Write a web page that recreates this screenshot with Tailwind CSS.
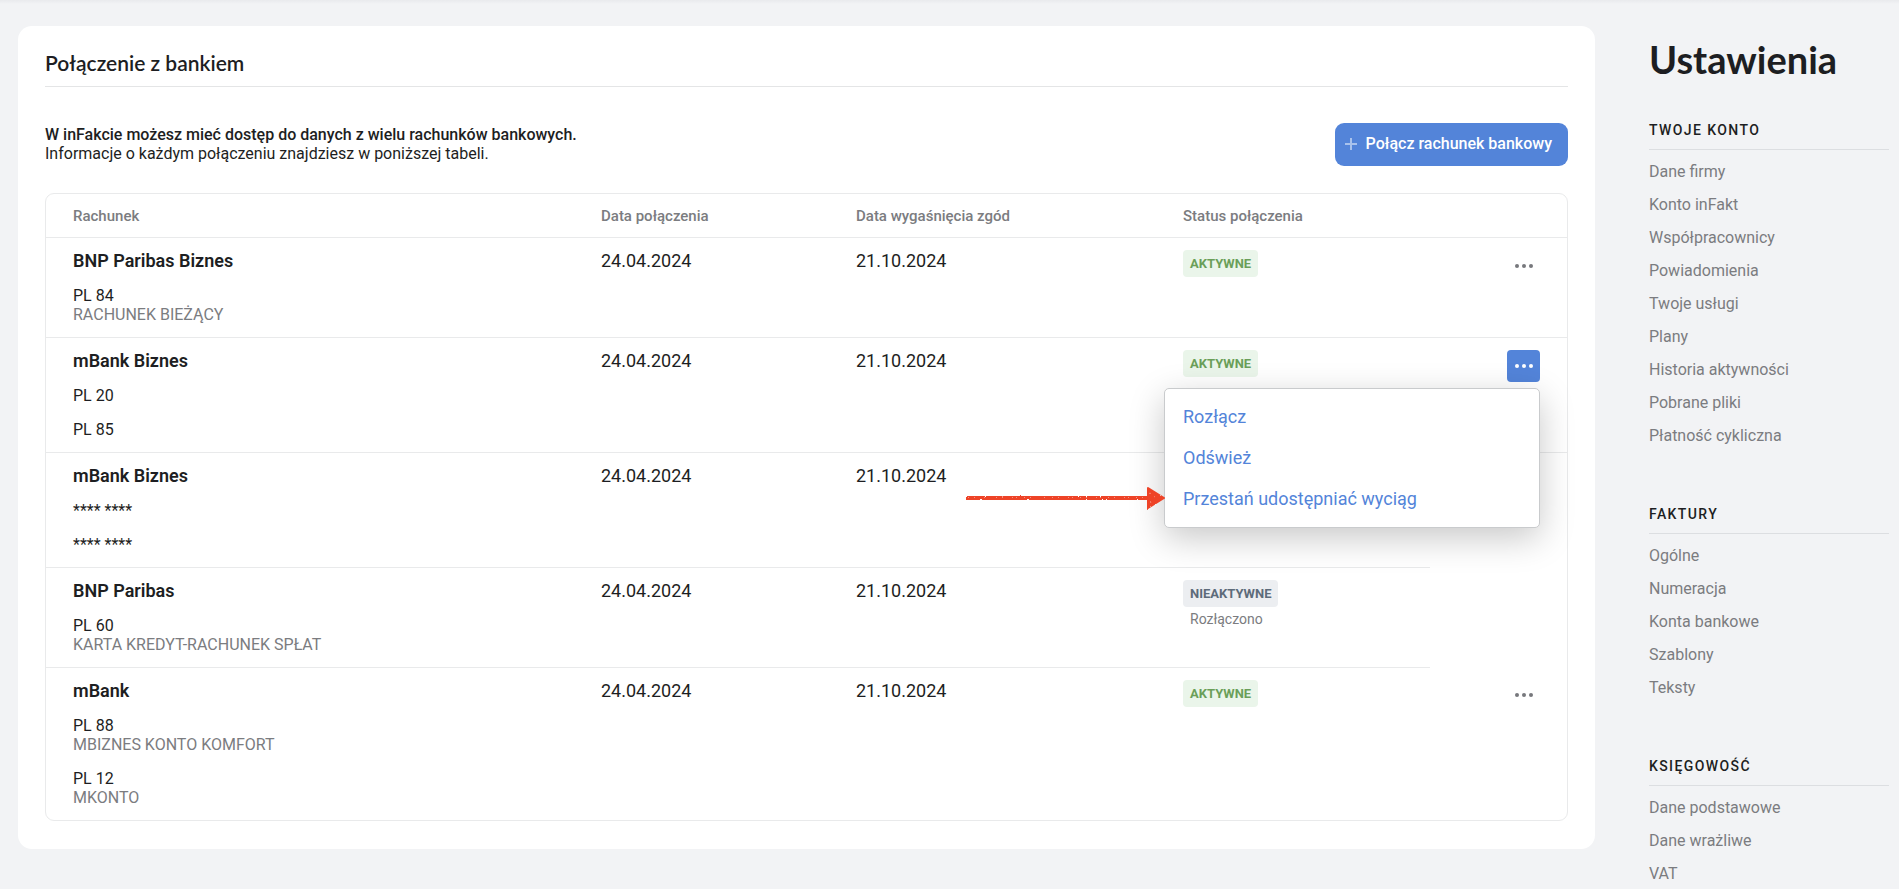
<!DOCTYPE html>
<html lang="pl">
<head>
  <meta charset="UTF-8" />
  <meta name="viewport" content="width=device-width, initial-scale=1.0" />
  <title>Ustawienia - Połączenie z bankiem</title>
  <script src="https://cdn.jsdelivr.net/npm/@tailwindcss/browser@4"></script>
</head>
<body class="min-h-screen bg-[#f2f3f5] font-[Roboto,sans-serif] text-[#1d1e22]">
  <div class="h-1 bg-linear-to-b from-[#e9eaed] to-[#f2f3f5]"></div>

  <div class="flex items-start pl-[18px] pr-[10px]">
    <!-- Bank connections -->
    <main class="mt-[22px] flex-1 rounded-[14px] bg-white px-[27px] pb-7">
      <h2 class="border-b border-[#e4e5e6] pt-[23px] pb-[9px] font-[Lato,sans-serif] text-[21px] leading-7 font-semibold">Połączenie z bankiem</h2>

      <div class="mt-[36px] flex items-start justify-between">
        <p class="pt-0.5 text-base leading-[19px]">
          <strong class="font-medium">W inFakcie możesz mieć dostęp do danych z wielu rachunków bankowych.</strong><br />
          Informacje o każdym połączeniu znajdziesz w poniższej tabeli.
        </p>
        <button type="button" class="flex h-[43px] items-center gap-[9px] rounded-[9px] bg-[#5384d9] pr-4 pb-px pl-[10px] text-base font-medium text-white">
          <svg class="size-3 text-white/50" viewBox="0 0 12 12" fill="none" stroke="currentColor" stroke-width="2"><path d="M6 0v12M0 6h12" /></svg>
          Połącz rachunek bankowy
        </button>
      </div>

      <div class="mt-[27px] rounded-[9px] border border-[#e9eaeb]">
        <table class="w-full table-fixed text-left">
          <colgroup>
            <col />
            <col class="w-[255px]" />
            <col class="w-[327px]" />
            <col class="w-[274px]" />
            <col class="w-[137px]" />
          </colgroup>
          <thead>
            <tr class="h-[43px] text-[15px] text-[#7b7c80] [&>*]:border-b [&>*]:border-[#e9eaeb] [&>*]:px-[27px] [&>*]:pt-0.5 [&>*]:font-medium">
              <th>Rachunek</th>
              <th>Data połączenia</th>
              <th>Data wygaśnięcia zgód</th>
              <th>Status połączenia</th>
              <td></td>
            </tr>
          </thead>
          <tbody class="text-lg leading-6 [&_td]:px-[27px] [&_td]:pt-[11px] [&_td]:pb-[13px] [&_td]:align-top [&>tr:not(:last-child)>td]:border-b [&>tr:not(:last-child)>td]:border-[#e9eaeb]">
            <tr>
              <td>
                <div class="font-semibold">BNP Paribas Biznes</div>
                <div class="mt-[13px] text-base leading-[19px]">PL 84<br /><span class="text-[#7b7c80]">RACHUNEK BIEŻĄCY</span></div>
              </td>
              <td>24.04.2024</td>
              <td>21.10.2024</td>
              <td><span class="mt-px inline-block rounded bg-[#eaf5ea] px-[7px] text-[13px] leading-[27px] font-bold text-[#6a9f59]">AKTYWNE</span></td>
              <td class="text-right">
                <button type="button" aria-label="Opcje" class="mt-px inline-flex h-8 w-[33px] items-center justify-center rounded text-[#77787c]">
                  <svg class="h-1 w-[18px]" viewBox="0 0 18 4" fill="currentColor"><circle cx="2" cy="2" r="2" /><circle cx="9" cy="2" r="2" /><circle cx="16" cy="2" r="2" /></svg>
                </button>
              </td>
            </tr>
            <tr>
              <td>
                <div class="font-semibold">mBank Biznes</div>
                <div class="mt-[13px] text-base leading-[19px]">PL 20</div>
                <div class="mt-[15px] text-base leading-[19px]">PL 85</div>
              </td>
              <td>24.04.2024</td>
              <td>21.10.2024</td>
              <td><span class="mt-px inline-block rounded bg-[#eaf5ea] px-[7px] text-[13px] leading-[27px] font-bold text-[#6a9f59]">AKTYWNE</span></td>
              <td class="relative text-right">
                <button type="button" aria-label="Opcje" aria-expanded="true" class="mt-px inline-flex h-8 w-[33px] items-center justify-center rounded bg-[#5384d9] text-white">
                  <svg class="h-1 w-[18px]" viewBox="0 0 18 4" fill="currentColor"><circle cx="2" cy="2" r="2" /><circle cx="9" cy="2" r="2" /><circle cx="16" cy="2" r="2" /></svg>
                </button>
                <!-- Options menu -->
                <div class="absolute top-[50px] right-[27px] z-10 flex w-[376px] flex-col items-start gap-[17px] rounded-[5px] border border-[#c9cbcd] bg-white px-[18px] py-4 text-left text-[#5384d9] shadow-[0_10px_35px_rgba(0,0,0,0.22)]">
                  <a href="#">Rozłącz</a>
                  <a href="#">Odśwież</a>
                  <a href="#">Przestań udostępniać wyciąg</a>
                  <!-- Marker arrow -->
                  <svg class="absolute top-[97px] right-full h-6 w-[200px]" viewBox="0 0 200 24">
                    <filter id="rough" x="0" y="0" width="200" height="24" filterUnits="userSpaceOnUse" color-interpolation-filters="sRGB">
                      <feTurbulence type="fractalNoise" baseFrequency="0.4" numOctaves="2" seed="4" result="noise" />
                      <feDisplacementMap in="SourceGraphic" in2="noise" scale="2" xChannelSelector="R" yChannelSelector="G" />
                    </filter>
                    <g filter="url(#rough)">
                      <path d="M1 12h184" stroke="#ee4327" stroke-width="4" />
                      <path d="M183 2l16 10-16 10z" fill="#ee4327" stroke="#ee4327" stroke-width="2" stroke-linejoin="round" />
                      <path d="M3 11.500h178M184 7l6 4M185 16l5-3" fill="none" stroke="#f6927f" stroke-width="1" stroke-dasharray="1 5 1 9 1 3 1 7" />
                    </g>
                  </svg>
                </div>
              </td>
            </tr>
            <tr>
              <td>
                <div class="font-semibold">mBank Biznes</div>
                <div class="mt-[13px] text-base leading-[19px]">**** ****</div>
                <div class="mt-[15px] text-base leading-[19px]">**** ****</div>
              </td>
              <td>24.04.2024</td>
              <td>21.10.2024</td>
              <td></td>
            </tr>
            <tr>
              <td>
                <div class="font-semibold">BNP Paribas</div>
                <div class="mt-[13px] text-base leading-[19px]">PL 60<br /><span class="text-[#7b7c80]">KARTA KREDYT-RACHUNEK SPŁAT</span></div>
              </td>
              <td>24.04.2024</td>
              <td>21.10.2024</td>
              <td>
                <span class="mt-px inline-block rounded bg-[#eceef1] px-[7px] text-[13px] leading-[27px] font-bold text-[#5d6b7a]">NIEAKTYWNE</span>
                <div class="mt-0.5 px-[7px] text-sm text-[#7b7c80]">Rozłączono</div>
              </td>
            </tr>
            <tr>
              <td>
                <div class="font-semibold">mBank</div>
                <div class="mt-[13px] text-base leading-[19px]">PL 88<br /><span class="text-[#7b7c80]">MBIZNES KONTO KOMFORT</span></div>
                <div class="mt-[15px] text-base leading-[19px]">PL 12<br /><span class="text-[#7b7c80]">MKONTO</span></div>
              </td>
              <td>24.04.2024</td>
              <td>21.10.2024</td>
              <td><span class="mt-px inline-block rounded bg-[#eaf5ea] px-[7px] text-[13px] leading-[27px] font-bold text-[#6a9f59]">AKTYWNE</span></td>
              <td class="text-right">
                <button type="button" aria-label="Opcje" class="mt-px inline-flex h-8 w-[33px] items-center justify-center rounded text-[#77787c]">
                  <svg class="h-1 w-[18px]" viewBox="0 0 18 4" fill="currentColor"><circle cx="2" cy="2" r="2" /><circle cx="9" cy="2" r="2" /><circle cx="16" cy="2" r="2" /></svg>
                </button>
              </td>
            </tr>
          </tbody>
        </table>
      </div>
    </main>

    <!-- Settings navigation -->
    <aside class="ml-[54px] w-[240px] pt-[31px]">
      <h1 class="mb-[37px] font-[Lato,sans-serif] text-[38px] leading-[48px] font-bold">Ustawienia</h1>
      <nav class="flex flex-col gap-[52px] text-base leading-[33px] text-[#7b7c80] [&_a]:block [&_h3]:mb-[5px] [&_h3]:border-b [&_h3]:border-[#dcdee1] [&_h3]:pb-[9px] [&_h3]:text-sm [&_h3]:leading-5 [&_h3]:font-medium [&_h3]:tracking-widest [&_h3]:text-[#1d1e22] [&_h3]:uppercase">
        <section>
          <h3>Twoje konto</h3>
          <a href="#">Dane firmy</a>
          <a href="#">Konto inFakt</a>
          <a href="#">Współpracownicy</a>
          <a href="#">Powiadomienia</a>
          <a href="#">Twoje usługi</a>
          <a href="#">Plany</a>
          <a href="#">Historia aktywności</a>
          <a href="#">Pobrane pliki</a>
          <a href="#">Płatność cykliczna</a>
        </section>
        <section>
          <h3>Faktury</h3>
          <a href="#">Ogólne</a>
          <a href="#">Numeracja</a>
          <a href="#">Konta bankowe</a>
          <a href="#">Szablony</a>
          <a href="#">Teksty</a>
        </section>
        <section>
          <h3>Księgowość</h3>
          <a href="#">Dane podstawowe</a>
          <a href="#">Dane wrażliwe</a>
          <a href="#">VAT</a>
        </section>
      </nav>
    </aside>
  </div>
</body>
</html>
